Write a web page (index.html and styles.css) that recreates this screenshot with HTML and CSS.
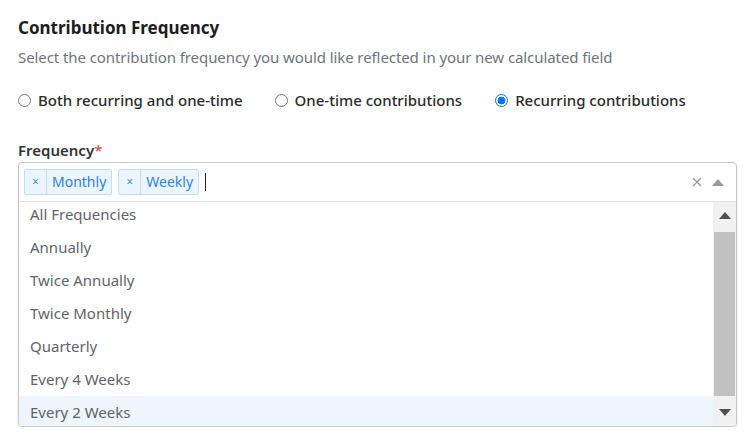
FILE: index.html
```html
<!DOCTYPE html>
<html>
<head>
<meta charset="utf-8">
<link rel="stylesheet" href="styles.css">
</head>
<body>
<div class="page">
  <h1 class="title">Contribution Frequency</h1>
  <p class="subtitle">Select the contribution frequency you would like reflected in your new calculated field</p>
  <div class="radios">
    <label class="radio"><span class="dot"></span>Both recurring and one-time</label>
    <label class="radio"><span class="dot"></span>One-time contributions</label>
    <label class="radio"><span class="dot checked"></span>Recurring contributions</label>
  </div>
  <div class="field-label">Frequency<span class="req">*</span></div>
  <div class="select">
    <div class="control">
      <div class="tags">
        <span class="tag"><span class="tag-x">×</span><span class="tag-text">Monthly</span></span>
        <span class="tag"><span class="tag-x">×</span><span class="tag-text">Weekly</span></span>
        <span class="caret"></span>
      </div>
      <div class="indicators">
        <svg class="clear" width="10" height="10" viewBox="0 0 10 10"><path d="M1 1L9 9M9 1L1 9" stroke="#999" stroke-width="1.3"/></svg>
        <svg class="arrow" width="12" height="7" viewBox="0 0 12 7"><path d="M0 7L6 0L12 7Z" fill="#999"/></svg>
      </div>
    </div>
    <div class="menu">
      <div class="viewport">
        <ul class="options">
          <li>All Frequencies</li>
          <li>Annually</li>
          <li>Twice Annually</li>
          <li>Twice Monthly</li>
          <li>Quarterly</li>
          <li>Every 4 Weeks</li>
          <li class="active">Every 2 Weeks</li>
        </ul>
      </div>
      <div class="scrollbar">
        <div class="sb-btn"><svg width="12" height="7" viewBox="0 0 12 7"><path d="M0 7L6 0L12 7Z" fill="#505050"/></svg></div>
        <div class="sb-track"><div class="sb-thumb"></div></div>
        <div class="sb-btn"><svg width="12" height="7" viewBox="0 0 12 7"><path d="M0 0L6 7L12 0Z" fill="#505050"/></svg></div>
      </div>
    </div>
  </div>
</div>
</body>
</html>
```
FILE: styles.css
```css
* { box-sizing: border-box; }
html, body { margin: 0; padding: 0; background: #fff; }
body {
  font-family: "Noto Sans", "Open Sans", sans-serif;
  color: #212529;
}
.page {
  padding: 15px 8px 0 18px;
}
.title {
  margin: 0;
  font-size: 17px;
  font-weight: 700;
  line-height: 26px;
  color: #1d1d1d;
}
.subtitle {
  margin: 5px 0 0;
  font-size: 15px;
  line-height: 22px;
  color: #6c757d;
  letter-spacing: -0.08px;
}
.radios {
  display: flex;
  margin-top: 21px;
  height: 22px;
  align-items: center;
}
.radio {
  display: flex;
  align-items: center;
  font-size: 15px;
  font-weight: 500;
  color: #2b2b2b;
  margin-right: 32px;
}
.radio:nth-child(2) { margin-right: 33px; }
.dot {
  width: 13px;
  height: 13px;
  border: 1px solid #767676;
  border-radius: 50%;
  margin-right: 7px;
  background: #fff;
}
.dot.checked {
  border: 1px solid #0075ff;
  background: radial-gradient(circle, #0075ff 0 3.6px, #fff 4.2px);
}
.field-label {
  margin-top: 28px;
  font-size: 15px;
  font-weight: 600;
  line-height: 22px;
  color: #333;
}
.req { color: #e03c3c; font-weight: 400; }
.select {
  margin-top: 1px;
  width: 719px;
  border: 1px solid #c6c6c6;
  border-radius: 4px;
  box-shadow: 0 1px 2px rgba(0,0,0,0.12);
  overflow: hidden;
}
.control {
  display: flex;
  align-items: center;
  height: 39px;
  border-bottom: 1px solid #e2e2e2;
}
.tags {
  flex: 1;
  display: flex;
  align-items: center;
  padding-left: 5px;
  gap: 6px;
}
.tag {
  display: flex;
  height: 26px;
  border: 1px solid #c5def6;
  background: #ebf5ff;
  border-radius: 2px;
  color: #2d84e0;
  font-size: 14px;
  line-height: 24px;
}
.tag-x {
  width: 22px;
  text-align: center;
  border-right: 1px solid #c5def6;
  font-size: 12px;
  color: #4a8fd8;
}
.tag-text { padding: 0 5px 0 5px; }
.caret {
  width: 1px;
  height: 18px;
  background: #222;
}
.indicators {
  display: flex;
  align-items: center;
  gap: 10px;
  padding-right: 12px;
}
.menu {
  display: flex;
  height: 224px;
}
.viewport {
  flex: 1;
  overflow: hidden;
}
.options {
  list-style: none;
  margin: -4px 0 0;
  padding: 0;
}
.options li {
  height: 33px;
  line-height: 33px;
  padding: 0 0 0 11px;
  font-size: 15px;
  color: #5f6368;
}
.options li.active { background: #eef5fd; }
.scrollbar {
  width: 23px;
  background: #f1f1f1;
  display: flex;
  flex-direction: column;
}
.sb-btn {
  height: 27px;
  display: flex;
  align-items: center;
  justify-content: center;
}
.sb-track {
  flex: 1;
  padding: 3px 1px;
}
.sb-thumb {
  height: 100%;
  background: #c1c1c1;
}
```
